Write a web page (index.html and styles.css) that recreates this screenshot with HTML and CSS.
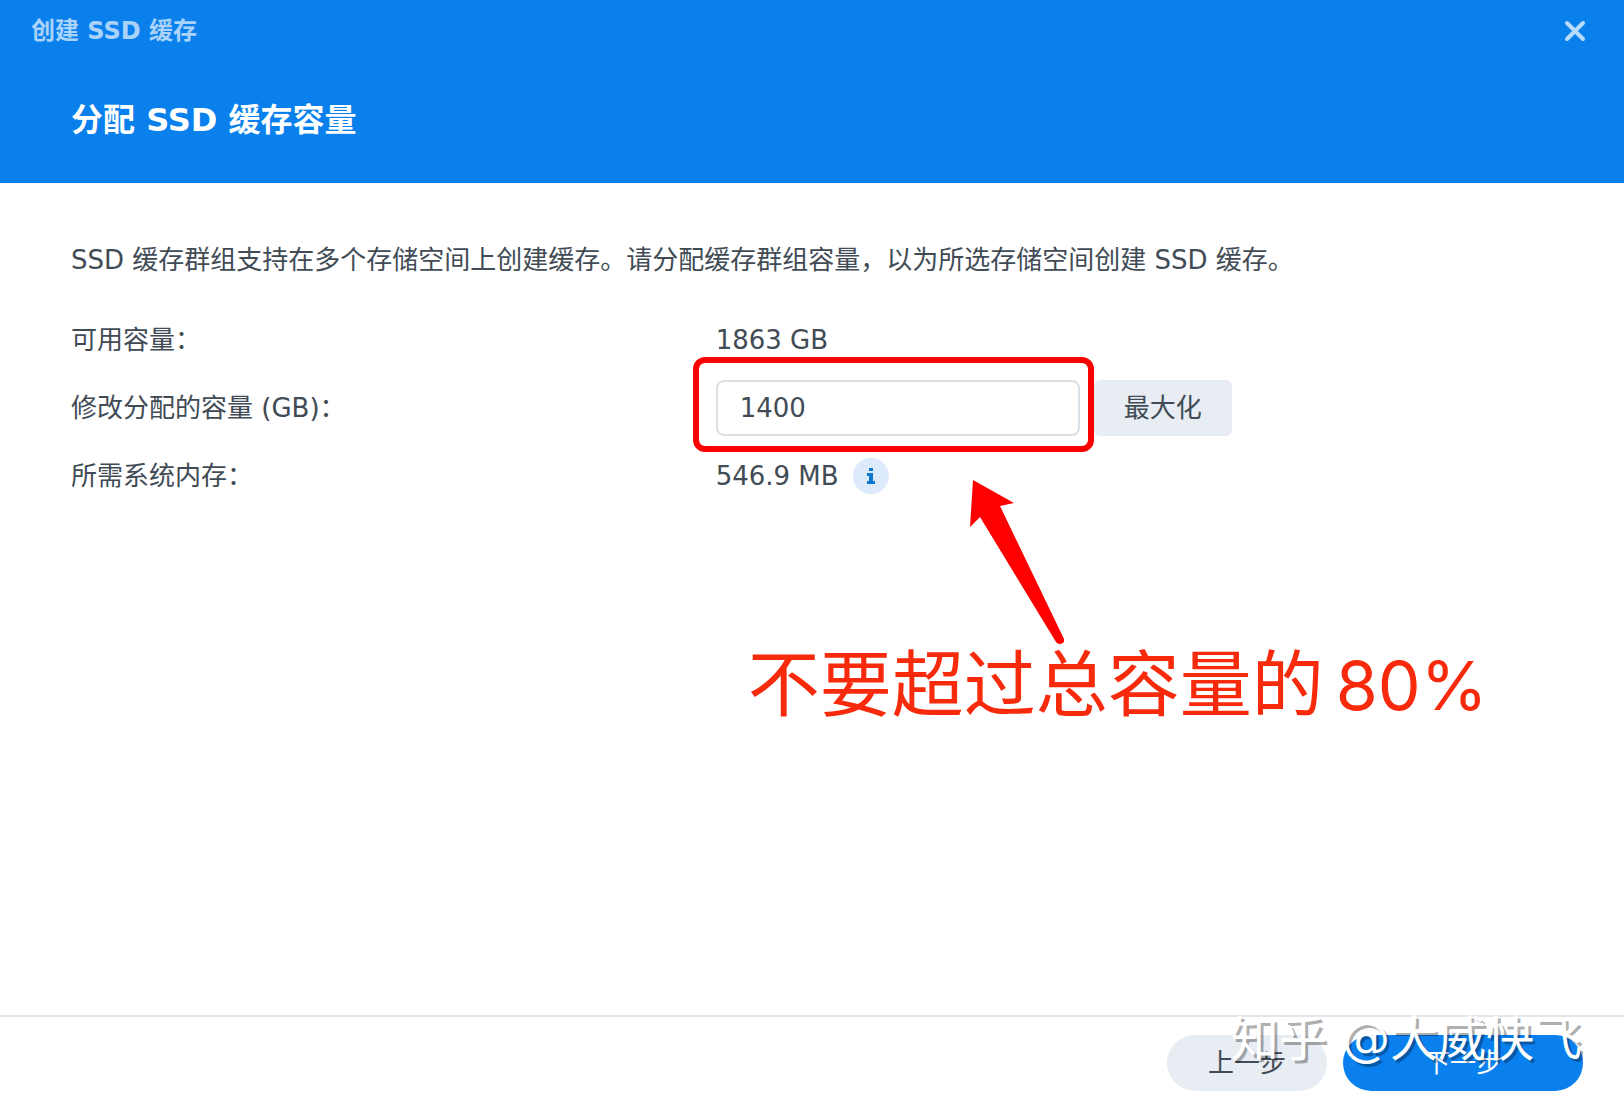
FILE: index.html
```html
<!DOCTYPE html>
<html lang="zh-CN">
<head>
    <meta charset="UTF-8">
    <meta name="viewport" content="width=device-width, initial-scale=1.0">
    <title>创建 SSD 缓存</title>
    <link rel="stylesheet" href="styles.css">
</head>
<body>
    <div class="wizard">
        <header class="wizard-header">
            <div class="title-bar">
                <span class="window-title">创建 SSD 缓存</span>
                <button type="button" class="close-button" aria-label="关闭">
                    <svg width="22" height="22" viewBox="0 0 22 22" fill="none" stroke="currentColor" stroke-width="4" stroke-linecap="round">
                        <path d="M3 3l16 16M19 3L3 19"/>
                    </svg>
                </button>
            </div>
            <h1 class="step-title">分配 SSD 缓存容量</h1>
        </header>

        <main class="wizard-body">
            <p class="description">SSD 缓存群组支持在多个存储空间上创建缓存。请分配缓存群组容量，以为所选存储空间创建 SSD 缓存。</p>
            <form class="form" id="cacheForm">
                <div class="row">
                    <span>可用容量：</span>
                    <div class="value">1863 GB</div>
                </div>
                <div class="row">
                    <label for="capacity">修改分配的容量 (GB)：</label>
                    <div class="value">
                        <div class="field">
                            <input type="text" id="capacity" class="capacity-input" value="1400">
                            <div class="highlight"></div>
                            <svg class="arrow" width="46" height="166" viewBox="0 0 46 166">
                                <path d="M3 0L44 23L30 26L94 159Q95 163 90 164Q87 164 86 162L10 37L0 47Z" fill="#fe0000"/>
                            </svg>
                            <div class="note">不要超过总容量的<span class="percent">80%</span></div>
                        </div>
                        <button type="button" class="max-button">最大化</button>
                    </div>
                </div>
                <div class="row">
                    <span>所需系统内存：</span>
                    <div class="value">
                        546.9 MB
                        <button type="button" class="info-button" aria-label="信息">
                            <svg width="10" height="16" viewBox="0 0 10 16" fill="currentColor">
                                <path d="M3 0h4v3H3zM1 5h6v8h2v3H1v-3h2V8H1z"/>
                            </svg>
                        </button>
                    </div>
                </div>
            </form>
        </main>

        <footer class="wizard-footer">
            <button type="button" class="nav-button prev-button">上一步</button>
            <button type="submit" form="cacheForm" class="nav-button next-button">下一步</button>
            <div class="watermark">知乎 @大威快飞</div>
        </footer>
    </div>
</body>
</html>
```
FILE: styles.css
```css
* {
    box-sizing: border-box;
}

body {
    margin: 0;
    font-family: "DejaVu Sans", "Noto Sans CJK SC", sans-serif;
    font-size: 26px;
    line-height: 40px;
    color: #414b55;
    background-color: #fff;
}

button, input {
    font: inherit;
    color: inherit;
    border: none;
}

button {
    cursor: pointer;
}

.wizard {
    display: flex;
    flex-direction: column;
    min-height: 100vh;
}

.wizard-header {
    padding-bottom: 39px;
    color: #fff;
    background-color: #0a80ec;
}

.title-bar {
    display: flex;
    justify-content: space-between;
    align-items: center;
    padding: 11px 32px 11px 31px;
}

.window-title {
    font-size: 24px;
    font-weight: bold;
    color: #a9d3fa;
}

.close-button {
    display: flex;
    padding: 6px;
    color: #b9dcfc;
    background: none;
}

.step-title {
    margin: 34px 71px 0;
    font-size: 32px;
    line-height: 48px;
}

.wizard-body {
    flex: 1;
    padding: 57px 71px 0;
}

.description {
    margin: 0 0 26px;
}

.row {
    display: grid;
    grid-template-columns: 43.5% 1fr;
    align-items: center;
    height: 68px;
}

.value {
    display: flex;
    align-items: center;
    gap: 14px;
}

.field {
    position: relative;
    width: 364px;
}

.capacity-input {
    display: block;
    width: 100%;
    height: 56px;
    padding: 0 22px;
    border: 2px solid #d9e0e6;
    border-radius: 8px;
    background-color: #fff;
}

.max-button {
    height: 56px;
    padding: 0 30px;
    border-radius: 6px;
    background-color: #e8edf3;
}

.info-button {
    display: flex;
    justify-content: center;
    align-items: center;
    width: 36px;
    height: 36px;
    padding: 0;
    border-radius: 50%;
    color: #0b79cf;
    background-color: #dceafb;
}

/* red marks over the capacity field */
.highlight {
    position: absolute;
    inset: -23px -14px -16px -23px;
    border: 6px solid #fa0000;
    border-radius: 12px;
    pointer-events: none;
}

.arrow {
    position: absolute;
    top: 100px;
    left: 254px;
    overflow: visible;
    pointer-events: none;
}

.note {
    position: absolute;
    top: 256px;
    left: 32px;
    font-family: Inter, "Noto Sans CJK SC", sans-serif;
    font-size: 72px;
    line-height: 96px;
    white-space: nowrap;
    color: #f72a0c;
}

.percent {
    margin-left: 12px;
    font-size: 68px;
}

.wizard-footer {
    position: relative;
    display: flex;
    justify-content: flex-end;
    gap: 16px;
    padding: 18px 41px 17px;
    border-top: 2px solid #e3e6e8;
}

.nav-button {
    height: 56px;
    border-radius: 28px;
}

.prev-button {
    width: 160px;
    background-color: #e8edf3;
}

.next-button {
    width: 240px;
    color: #fff;
    background-color: #0a80ee;
}

.watermark {
    position: absolute;
    top: -10px;
    right: 42px;
    font-size: 48px;
    line-height: 64px;
    color: #fff;
    text-shadow: 3px 3px 0 rgba(0, 0, 0, 0.33);
    pointer-events: none;
}
```
